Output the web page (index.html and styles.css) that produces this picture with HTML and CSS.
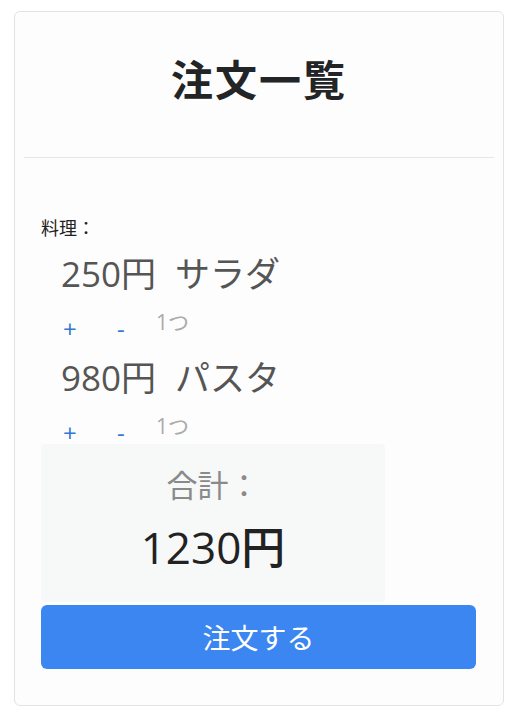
FILE: index.html
```html
<!DOCTYPE html>
<html lang="ja">
<head>
<meta charset="utf-8">
<link rel="stylesheet" href="styles.css">
</head>
<body>
<div class="card">
  <div class="card-header">
    <h1 class="title">注文一覧</h1>
  </div>
  <div class="card-body">
    <div class="label">料理：</div>
    <div class="item">
      <div class="item-name"><span class="price">250円</span><span class="dish">サラダ</span></div>
      <div class="controls">
        <button class="qty-btn plus">+</button>
        <button class="qty-btn minus">-</button>
        <span class="qty">1つ</span>
      </div>
    </div>
    <div class="item">
      <div class="item-name"><span class="price">980円</span><span class="dish">パスタ</span></div>
      <div class="controls">
        <button class="qty-btn plus">+</button>
        <button class="qty-btn minus">-</button>
        <span class="qty">1つ</span>
      </div>
    </div>
    <div class="total">
      <div class="total-label">合計：</div>
      <div class="total-value">1230円</div>
    </div>
    <button class="order-btn">注文する</button>
  </div>
</div>
</body>
</html>
```
FILE: styles.css
```css
* { box-sizing: border-box; }
body {
  margin: 0;
  padding: 11px 0 0 14px;
  background: #ffffff;
  font-family: "Open Sans", "Noto Sans CJK JP", sans-serif;
}
.card {
  width: 490px;
  height: 695px;
  border: 1px solid #e3e3e3;
  border-radius: 6px;
  background: #fdfdfd;
  display: flex;
  flex-direction: column;
}
.card-header {
  height: 146px;
  margin: 0 9px;
  border-bottom: 1px solid #e6e6e6;
  display: flex;
  align-items: center;
  justify-content: center;
}
.title {
  margin: 0 0 14px 0;
  font-family: "Noto Sans CJK JP", sans-serif;
  font-size: 42px;
  font-weight: 700;
  color: #222426;
  letter-spacing: 2px;
}
.card-body {
  padding: 57px 26px 0 26px;
  display: flex;
  flex-direction: column;
  align-items: flex-start;
}
.label {
  font-family: "Noto Sans CJK JP", sans-serif;
  font-size: 18px;
  color: #222;
  line-height: 24px;
}
.item {
  padding-left: 20px;
  margin-top: 11px;
}
.item + .item {
  margin-top: 15px;
}
.item-name {
  display: flex;
  gap: 19px;
  font-size: 35px;
  color: #555;
  line-height: 48px;
}
.controls {
  display: flex;
  align-items: flex-start;
  height: 41px;
}
.qty-btn {
  border: none;
  background: none;
  margin-top: 19px;
  padding: 0 0 0 2px;
  text-align: left;
  font-family: "Open Sans", sans-serif;
  font-size: 24px;
  color: #3476d2;
  line-height: 24px;
}
.plus {
  width: 54px;
}
.minus {
  width: 41px;
}
.qty {
  font-size: 21px;
  color: #aaa;
  line-height: 26px;
  padding-top: 11px;
}
.total {
  margin-top: 1px;
  width: 344px;
  height: 158px;
  background: #f7f8f8;
  border-radius: 4px;
  display: flex;
  flex-direction: column;
  align-items: center;
  padding-top: 18px;
}
.total-label {
  font-family: "Noto Sans CJK JP", sans-serif;
  font-size: 31px;
  color: #8a8a8a;
  line-height: 44px;
}
.total-value {
  font-size: 44px;
  font-weight: 500;
  color: #222;
  line-height: 62px;
  margin-top: 10px;
}
.order-btn {
  margin-top: 3px;
  width: 435px;
  height: 64px;
  border: none;
  border-radius: 6px;
  background: #3b86f0;
  color: #fff;
  font-family: "Noto Sans CJK JP", sans-serif;
  font-size: 28px;
}
```
